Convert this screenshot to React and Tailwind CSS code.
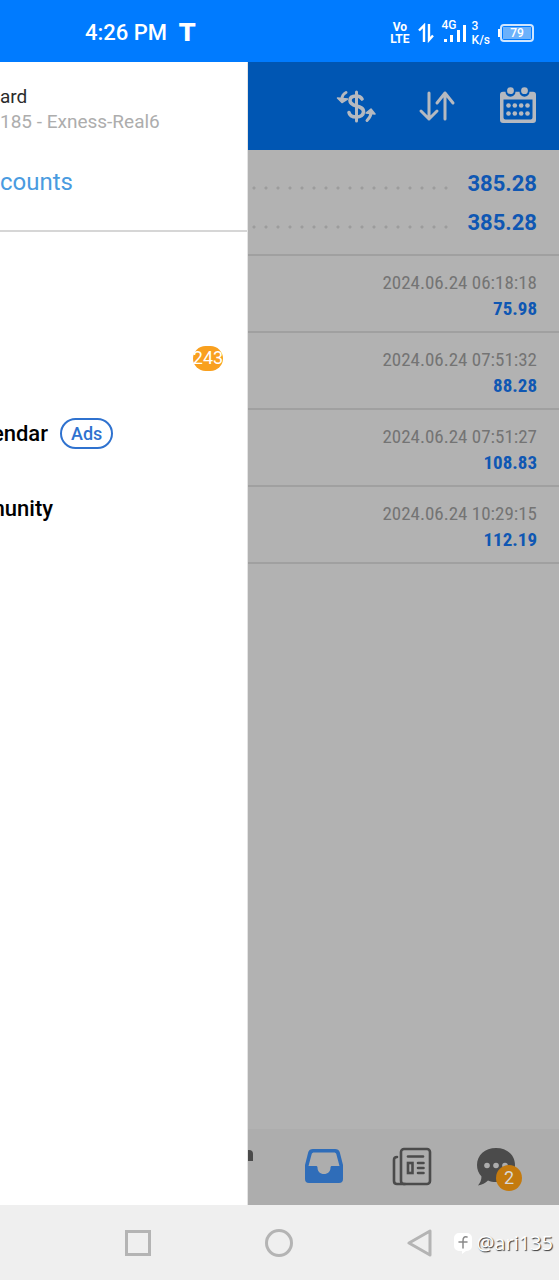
import React from "react";

const totals = [
  { id: "profit", value: "385.28" },
  { id: "balance", value: "385.28" },
];

const deals = [
  { time: "2024.06.24 06:18:18", profit: "75.98" },
  { time: "2024.06.24 07:51:32", profit: "88.28" },
  { time: "2024.06.24 07:51:27", profit: "108.83" },
  { time: "2024.06.24 10:29:15", profit: "112.19" },
];

/* ================= ICONS ================= */
const DollarIcon = () => (
  <svg viewBox="0 0 40 40" className="size-10" fill="none" stroke="#b5b9c0" strokeLinecap="round">
    <path d="M20.500 6v29" strokeWidth="3" />
    <path d="M26 13c-1-2-3-3-6-3-4 0-6 2-6 4.500 0 3.500 3 4.500 6.500 5.500s7 2 7 5.500-3 5.500-7 5.500-7-1.500-7.500-4.500" strokeWidth="3.600" />
    <path d="M10 6.500C7 8 6 10 6 13" strokeWidth="3" />
    <path d="M1.500 12l10 1-5.500 3.500z" fill="#b5b9c0" strokeWidth="1.500" strokeLinejoin="round" />
    <path d="M31 34.500c2-2 4-4 4-8" strokeWidth="3" />
    <path d="M30 27l5-4 4 5z" fill="#b5b9c0" strokeWidth="1.500" strokeLinejoin="round" />
  </svg>
);

const SortIcon = () => (
  <svg viewBox="0 0 40 40" className="size-10" fill="none" stroke="#b5b9c0" strokeWidth="3" strokeLinecap="round" strokeLinejoin="round">
    <path d="M12 7v26M4 25l8 8 8-8" />
    <path d="M28 33V7M20 17l8-10 8 10" />
  </svg>
);

const CalendarIcon = () => (
  <svg viewBox="0 0 40 40" className="size-10">
    <path
      fill="#b5b9c0"
      fillRule="evenodd"
      d="M5 5.700h2.500a5 5 0 0 0 10 0h4a5 5 0 0 0 10 0H35a3 3 0 0 1 3 3V34a3 3 0 0 1-3 3H5a3 3 0 0 1-3-3V8.700a3 3 0 0 1 3-3zM5.500 13.500v18a2 2 0 0 0 2 2h25a2 2 0 0 0 2-2v-18z"
    />
    <circle cx="12.500" cy="4.700" r="3.400" fill="#b5b9c0" />
    <circle cx="26.500" cy="4.700" r="3.400" fill="#b5b9c0" />
    {[19.5, 27.5].map((y) =>
      [10.5, 16.8, 23.2, 29.5].map((x) => (
        <circle key={`${x}-${y}`} cx={x} cy={y} r="2.300" fill="#b5b9c0" />
      ))
    )}
  </svg>
);

const InboxIcon = () => (
  <svg viewBox="0 0 40 40" className="size-10">
    <path
      fill="#2f6db9"
      fillRule="evenodd"
      d="M9 2h22c2.500 0 4 1 4.700 3L39 18v14a4 4 0 0 1-4 4H5a4 4 0 0 1-4-4V18L4.300 5C5 3 6.500 2 9 2zm1 3.500c-1 0-2 .5-2.300 1.500L4.500 19h7.500c1 0 1.500.6 1.500 1.500 0 4 2.500 6.500 6.500 6.500s6.500-2.500 6.500-6.500c0-.9.5-1.500 1.500-1.500h7.500L32.300 7C32 6 31 5.500 30 5.500z"
    />
  </svg>
);

const NewsIcon = () => (
  <svg viewBox="0 0 40 40" className="size-10" fill="none" stroke="#4b4b4b" strokeWidth="2.600" strokeLinecap="round" strokeLinejoin="round">
    <rect x="9" y="2" width="29" height="35" rx="3" />
    <path d="M5 10c-2 0-3 1-3 3v21c0 2 1 3 3 3h8" />
    <path d="M16 9.500h15" />
    <rect x="16" y="16" width="4.500" height="10" strokeLinejoin="miter" />
    <path d="M26 16h5.500M26 21h5.500M26 26h5.500" />
  </svg>
);

const ChatIcon = () => (
  <svg viewBox="0 0 40 40" className="size-10">
    <path
      fill="#4b4b4b"
      d="M19 1c11 0 19 7 19 17s-8 17-19 17c-3 0-5.500-.5-8-1.500C8.500 36 5 38 1 38.500c2-2.500 3.500-5.500 3.500-9C1.500 26.500 0 22.500 0 18 0 8 8 1 19 1z"
    />
    <circle cx="10" cy="18.500" r="2.800" fill="#adadad" />
    <circle cx="19" cy="18.500" r="2.800" fill="#adadad" />
    <circle cx="28" cy="18.500" r="2.800" fill="#adadad" />
  </svg>
);

/* ================= STATUS BAR ================= */
const StatusBar = () => (
  <div className="flex h-[62px] shrink-0 items-center justify-between bg-[#007bff] pt-1 pl-[85px] pr-[25px] text-white">
    <div className="flex items-center gap-3">
      <span className="text-[22px] leading-6 font-medium">4:26 PM</span>
      <span className="font-['DejaVu_Sans'] text-2xl leading-6 font-bold">T</span>
    </div>

    <div className="flex items-center gap-2">
      <div className="flex flex-col items-center text-xs leading-3 font-bold">
        <span>Vo</span>
        <span>LTE</span>
      </div>
      <svg viewBox="0 0 16 20" className="h-5 w-4" fill="none" stroke="#fff" strokeWidth="2.400">
        <path d="M6 19V2.500L1 7.500M11 1v16l4-4.500" />
      </svg>
      <div className="flex items-center gap-1">
        <div className="relative h-6 w-[26px]">
          <span className="absolute -top-1 left-0 text-xs leading-4 font-medium">4G</span>
          <svg viewBox="0 0 26 24" className="h-6 w-[26px]" fill="#fff">
            <path d="M2 18h3v3H2zM8 14h3v7H8zM15 9h3v12h-3zM21 4h3v17h-3z" />
          </svg>
        </div>
        <div className="flex flex-col text-xs leading-[14px] font-medium">
          <span>3</span>
          <span>K/s</span>
        </div>
      </div>
      <div className="flex items-center">
        <span className="h-2 w-[2px] bg-white" />
        <span className="flex h-[18px] w-[34px] items-center justify-center rounded border-2 border-[#cfe6ff] bg-[#007bff] p-px">
          <span className="flex h-3 w-full items-center justify-center bg-[#6bb1fb] text-xs leading-3 font-medium">
            79
          </span>
        </span>
      </div>
    </div>
  </div>
);

/* ================= DRAWER ================= */
const Drawer = () => (
  <aside className="w-[44%] min-w-62 shrink-0 overflow-hidden border-r border-[#e4e4e4] bg-white">
    <div className="border-b-2 border-[#d6d6d6] pt-[22px] pb-[32px]">
      <p className="text-[19px] leading-[26px] text-[#2b2b2b]">ard</p>
      <p className="text-[19px] leading-6 text-[#adadad]">185 - Exness-Real6</p>
      <a href="#accounts" className="mt-8 block text-2xl leading-8 text-[#4a9be0]">
        counts
      </a>
    </div>

    <nav className="pt-[88px] text-[22px] font-medium text-black">
      <a href="#mailbox" aria-label="Mailbox" className="flex h-[76px] items-center justify-end pr-6">
        <span className="flex h-[25px] w-[30px] items-center justify-center rounded-full bg-[#f9a01f] text-lg leading-5 font-normal text-white">
          243
        </span>
      </a>
      <a href="#calendar" className="flex h-[75px] items-center gap-3">
        <span className="flex w-12 justify-end">endar</span>
        <span className="rounded-full border-2 border-[#2f72cf] px-[9px] text-lg leading-[27px] text-[#2f72cf]">Ads</span>
      </a>
      <a href="#community" className="flex h-[75px] items-center">
        <span className="flex w-[53px] justify-end">munity</span>
      </a>
    </nav>
  </aside>
);

/* ================= HISTORY ================= */
const History = () => (
  <main className="flex min-w-0 flex-1 flex-col bg-[#b2b2b2]">
    <header className="flex h-[88px] items-center justify-end gap-[41px] bg-[#0056b3] pr-[21px]">
      <button type="button" aria-label="Symbols"><DollarIcon /></button>
      <button type="button" aria-label="Sort"><SortIcon /></button>
      <button type="button" aria-label="Period"><CalendarIcon /></button>
    </header>

    <section className="border-b-2 border-[#a0a0a0] pt-[14px] pr-[22px] pb-3">
      {totals.map((row) => (
        <div key={row.id} className="flex h-[39px] items-center gap-3">
          <span className="mt-2 h-1 flex-1 bg-[radial-gradient(circle_at_center,#9c9c9c_1px,transparent_2px)] bg-[length:12px_4px]" />
          <span className="text-[22px] leading-6 font-bold text-[#0f57b3]">{row.value}</span>
        </div>
      ))}
    </section>

    <ul>
      {deals.map((deal) => (
        <li
          key={deal.time}
          className="flex flex-col items-end border-b-2 border-[#a0a0a0] pt-[14px] pr-[22px] pb-[9px] font-['Roboto_Condensed',Roboto,sans-serif] text-[19px] leading-[26px]"
        >
          <span className="text-[#747474]">{deal.time}</span>
          <span className="font-bold text-[#0f57b3]">{deal.profit}</span>
        </li>
      ))}
    </ul>

    <nav className="mt-auto flex h-[76px] items-center justify-end bg-[#adadad] pr-[15px]">
      <span className="mr-auto mb-6 h-[11px] w-[5px] rounded-tr-sm bg-[#4b4b4b]" />
      <button type="button" aria-label="History" className="flex w-[88px] justify-center"><InboxIcon /></button>
      <button type="button" aria-label="News" className="flex w-[88px] justify-center"><NewsIcon /></button>
      <button type="button" aria-label="Messages" className="flex w-[88px] justify-center">
        <span className="relative w-[46px]">
          <ChatIcon />
          <span className="absolute right-px -bottom-1 flex size-[26px] items-center justify-center rounded-full bg-[#c47a0e] text-lg leading-5 text-[#d8d8d8]">
            2
          </span>
        </span>
      </button>
    </nav>
  </main>
);

/* ================= SYSTEM BUTTONS ================= */
const SystemNav = () => (
  <footer className="flex h-[75px] shrink-0 items-center bg-[#efefef] pr-[6px] pl-[124px]">
    <div className="flex flex-1 items-center justify-between">
      <button type="button" aria-label="Recent apps">
        <svg viewBox="0 0 28 28" className="size-7" fill="none" stroke="#b4b4b4" strokeWidth="3">
          <rect x="2.500" y="2.500" width="23" height="23" />
        </svg>
      </button>
      <button type="button" aria-label="Home">
        <svg viewBox="0 0 28 28" className="size-7" fill="none" stroke="#b4b4b4" strokeWidth="3">
          <circle cx="14" cy="14" r="12.500" />
        </svg>
      </button>
      <button type="button" aria-label="Back">
        <svg viewBox="0 0 28 28" className="size-7" fill="none" stroke="#b4b4b4" strokeWidth="3" strokeLinejoin="round">
          <path d="M24 2v24L3 14z" />
        </svg>
      </button>
    </div>
    <div className="ml-5 flex items-center gap-1">
      <svg viewBox="0 0 18 24" className="h-6 w-[18px]">
        <path fill="#fff" d="M5 2h8a5 5 0 0 1 5 5v8a5 5 0 0 1-5 5h-1l-4 3v-3H5a5 5 0 0 1-5-5V7a5 5 0 0 1 5-5z" />
        <path d="M13 6c-3-1-4 1-4 4v7M5 11h8" fill="none" stroke="#8a8a8a" strokeWidth="1.500" strokeLinecap="round" />
      </svg>
      <span className="font-['Open_Sans',sans-serif] text-xl leading-6 text-white [text-shadow:1px_1px_1px_#333]">@ari135</span>
    </div>
  </footer>
);

const App = () => {
  return (
    <div className="flex min-h-screen flex-col font-[Roboto,sans-serif]">
      <StatusBar />
      <div className="flex flex-1">
        <Drawer />
        <History />
      </div>
      <SystemNav />
    </div>
  );
};

export default App;
